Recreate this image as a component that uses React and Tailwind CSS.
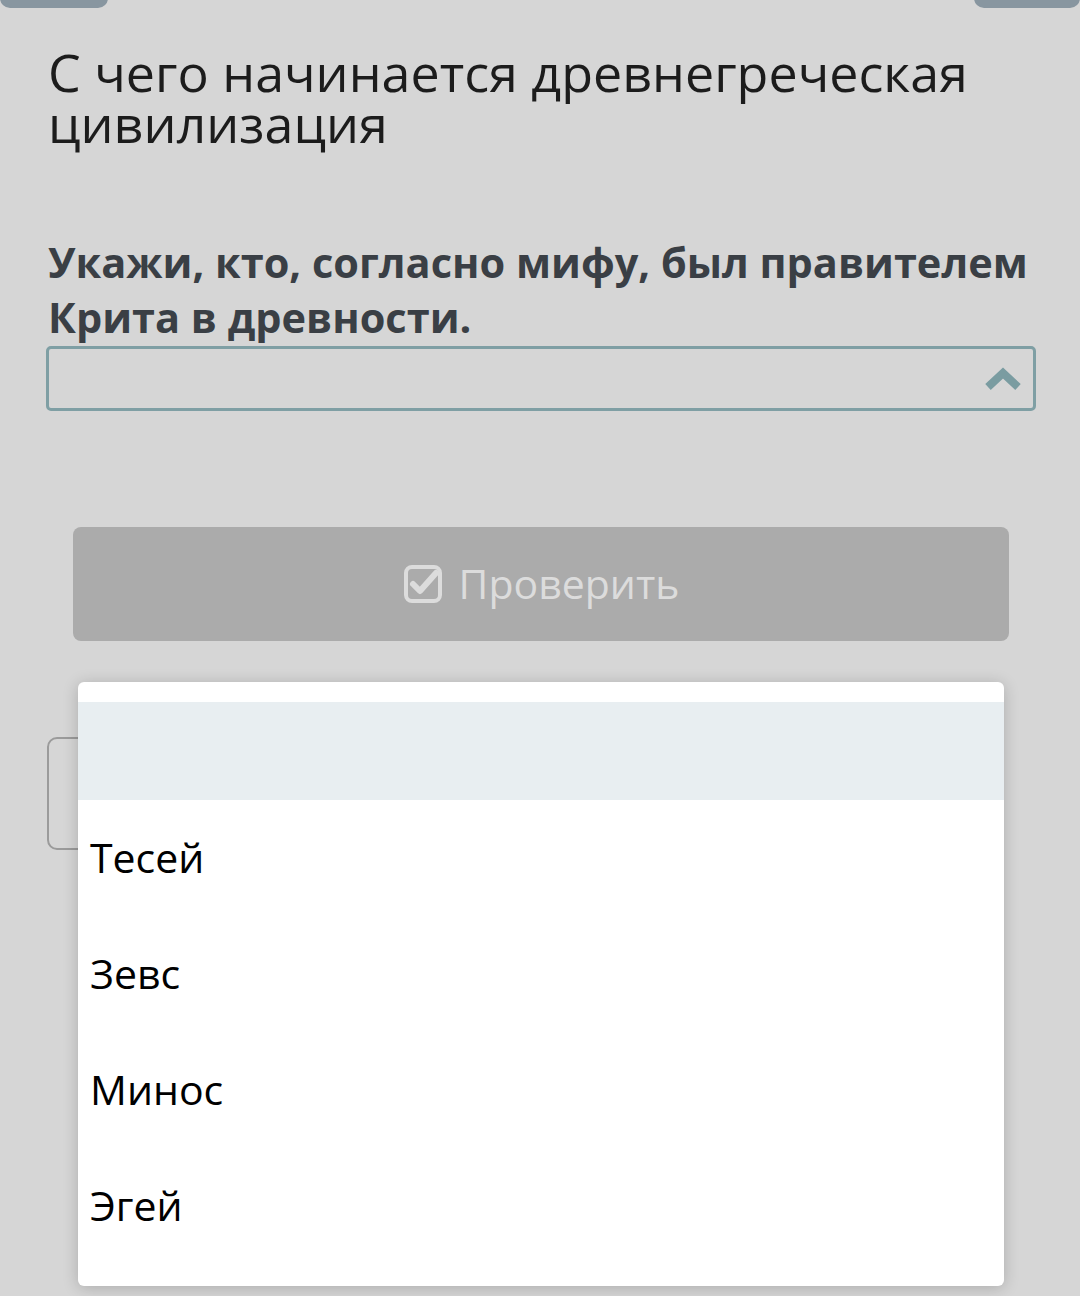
import React from 'react';

const font = { fontFamily: '"Open Sans", "Noto Sans", sans-serif' };

const CheckSquare = () => (
  <svg width="40" height="40" viewBox="0 0 40 40" fill="none">
    <rect x="3" y="3" width="34" height="34" rx="6" stroke="#dcdcdc" strokeWidth="4" />
    <path d="M10 20 L17 27 L33 9" stroke="#dcdcdc" strokeWidth="6" strokeLinecap="round" strokeLinejoin="round" />
  </svg>
);

const options = ['Тесей', 'Зевс', 'Минос', 'Эгей'];

export default function App() {
  return (
    <div className="relative w-[1080px] h-[1296px] overflow-hidden bg-[#d6d6d6]" style={font}>
      {/* top tab remnants */}
      <div className="absolute left-0 top-[-20px] w-[108px] h-[28px] rounded-b-[10px] bg-[#8896a0]" />
      <div className="absolute right-0 top-[-20px] w-[106px] h-[28px] rounded-b-[10px] bg-[#8896a0]" />

      <div className="px-[48px] pt-[46px]">
        <h1 className="text-[52px] leading-[51px] text-[#1c1c1c] font-normal">
          С чего начинается древнегреческая цивилизация
        </h1>

        <p className="mt-[87px] text-[41.5px] leading-[55px] font-bold text-[#3a3f45]">
          Укажи, кто, согласно мифу, был правителем Крита в древности.
        </p>

        <div className="-ml-[2px] mt-[1px] w-[990px] h-[65px] rounded-[5px] border-[3px] border-[#7f9fa4] flex items-center justify-end pr-[10px]">
          <svg width="40" height="28" viewBox="0 0 40 28" fill="none">
            <path d="M5 22 L20 8 L35 22" stroke="#7a9ca1" strokeWidth="8" strokeLinejoin="miter" />
          </svg>
        </div>

        <div className="ml-[25px] mr-[23px] mt-[116px] h-[114px] rounded-[8px] bg-[#ababab] flex items-center justify-center gap-[16px]">
          <CheckSquare />
          <span className="text-[41px] text-[#dcdcdc]">Проверить</span>
        </div>

        <div className="-ml-[1px] mt-[96px] w-[900px] h-[113px] rounded-[10px] border-[2px] border-[#9b9b9b]" />
      </div>

      {/* open dropdown list */}
      <div className="absolute left-[78px] top-[682px] w-[926px] h-[604px] rounded-[6px] bg-white pt-[20px] shadow-[0_2px_16px_rgba(0,0,0,0.2)]">
        <div className="h-[98px] bg-[#e8eef1]" />
        {options.map((o) => (
          <div key={o} className="h-[116px] flex items-center pl-[12px] text-[41px] text-black">
            {o}
          </div>
        ))}
      </div>
    </div>
  );
}
